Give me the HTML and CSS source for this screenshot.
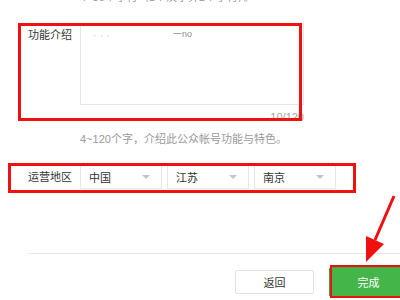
FILE: index.html
```html
<!DOCTYPE html>
<html lang="zh-CN">
<head>
    <meta charset="UTF-8">
    <title>功能介绍 - 设置</title>
    <link rel="stylesheet" href="styles.css">
</head>
<body>
    <div class="page">
        <p class="top-hint">4~30个字符（1个汉字算2个字符）。</p>

        <div class="form-row intro-row">
            <label class="row-label">功能介绍</label>
            <div class="textarea">
                <span class="blur-a">· ·  ·</span>
                <span class="blur-b">一no</span>
            </div>
        </div>
        <div class="counter">10/120</div>
        <p class="hint">4~120个字，介绍此公众帐号功能与特色。</p>

        <div class="form-row region-row">
            <label class="row-label">运营地区</label>
            <div class="select"><span>中国</span><i class="caret"></i></div>
            <div class="select"><span>江苏</span><i class="caret"></i></div>
            <div class="select"><span>南京</span><i class="caret"></i></div>
        </div>

        <div class="divider"></div>

        <div class="actions">
            <button class="btn btn-default">返回</button>
            <button class="btn btn-primary">完成</button>
        </div>

        <!-- red annotations drawn over the form -->
        <div class="mark mark-intro"></div>
        <div class="mark mark-region"></div>
        <div class="mark mark-done"></div>
        <svg class="arrow" width="400" height="300" viewBox="0 0 400 300">
            <line x1="394" y1="196" x2="375" y2="240" stroke="#f01010" stroke-width="3"/>
            <polygon points="366,236 384,244 366,262" fill="#f01010"/>
        </svg>
    </div>
</body>
</html>
```

FILE: styles.css
```css
body {
    margin: 0;
    background: #fff;
    font-family: "Liberation Sans", "Noto Sans CJK SC", sans-serif;
    font-size: 11px;
    color: #353535;
    overflow: hidden;
}
.page {
    position: relative;
    width: 400px;
    height: 300px;
    overflow: hidden;
}
.top-hint {
    margin: -10px 0 0 80px;
    line-height: 14px;
    color: #9a9a9a;
    white-space: nowrap;
}
.form-row {
    display: flex;
}
.row-label {
    width: 52px;
    padding-left: 28px;
    line-height: 14px;
    color: #353535;
}
.intro-row {
    margin-top: 19px;
}
.intro-row .row-label {
    padding-top: 5px;
}
.textarea {
    width: 224px;
    height: 82px;
    box-sizing: border-box;
    border: 1px solid #e6e6e6;
    padding: 4px 12px;
    line-height: 14px;
    position: relative;
}
.blur-a {
    color: #cfcfcf;
    filter: blur(0.4px);
}
.blur-b {
    position: absolute;
    left: 92px;
    top: 3px;
    color: #8a8a8a;
    font-size: 9px;
    filter: blur(0.4px);
}
.counter {
    width: 304px;
    margin-top: 5px;
    text-align: right;
    line-height: 14px;
    color: #a3a3a3;
}
.hint {
    margin: 8px 0 0 80px;
    line-height: 14px;
    color: #9a9a9a;
}
.region-row {
    margin-top: 19px;
    align-items: center;
    gap: 5px;
}
.region-row .row-label {
    margin-right: -5px;
}
.select {
    width: 82px;
    height: 24px;
    box-sizing: border-box;
    border: 1px solid #e7e7e7;
    padding: 0 8px;
    display: flex;
    align-items: center;
    justify-content: space-between;
    color: #333;
}
.caret {
    width: 0;
    height: 0;
    border-left: 4px solid transparent;
    border-right: 4px solid transparent;
    border-top: 4px solid #c4c4c4;
    margin-right: 3px;
}
.divider {
    margin: 64px 0 0 28px;
    border-top: 1px solid #e7e7e7;
}
.actions {
    display: flex;
    align-items: center;
    gap: 15px;
    padding-left: 235px;
    margin-top: 13px;
}
.btn {
    flex: none;
    width: 79px;
    font-family: inherit;
    font-size: 11px;
    border-radius: 2px;
}
.btn-default {
    height: 24px;
    background: #fff;
    border: 1px solid #e2e2e2;
    color: #333;
}
.btn-primary {
    height: 30px;
    background: #44b549;
    border: 1px solid #3ea842;
    color: #fff;
}
.mark {
    position: absolute;
    border: 3px solid #f01010;
    box-sizing: border-box;
}
.mark-intro {
    left: 18px;
    top: 23px;
    width: 284px;
    height: 98px;
}
.mark-region {
    left: 8px;
    top: 163px;
    width: 348px;
    height: 30px;
}
.mark-done {
    left: 330px;
    top: 265px;
    width: 80px;
    height: 33px;
    border-width: 2px;
}
.arrow {
    position: absolute;
    left: 0;
    top: 0;
}
```
